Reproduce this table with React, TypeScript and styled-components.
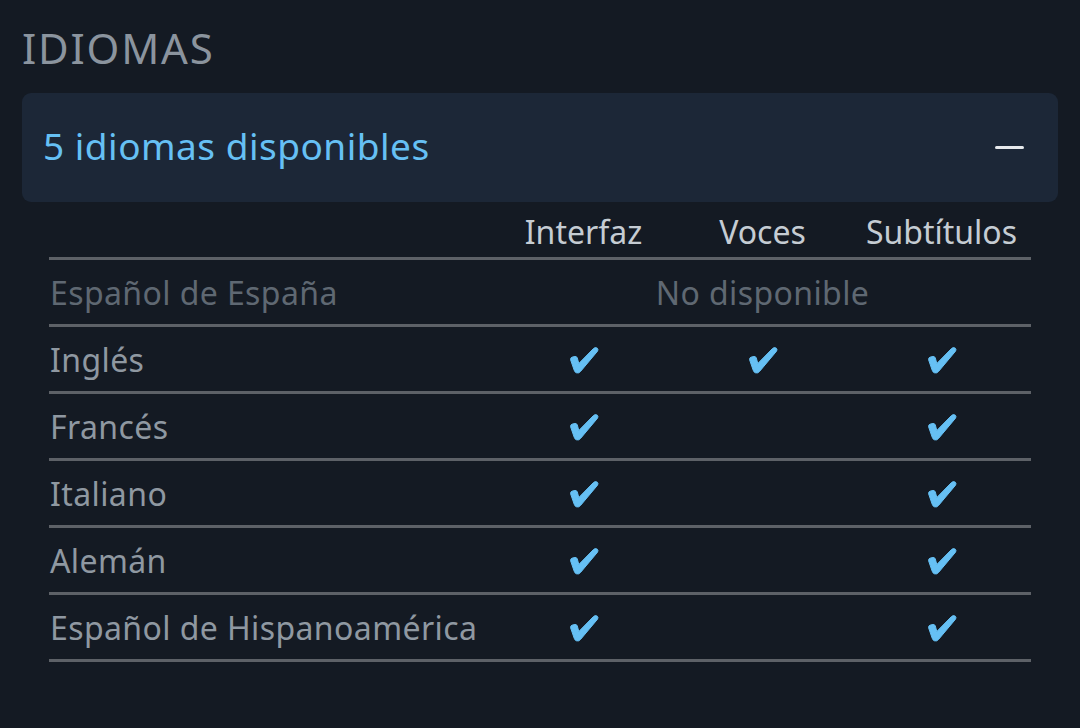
import React from "react";
import styled, { createGlobalStyle } from "styled-components";

const Global = createGlobalStyle`
  html, body { margin: 0; padding: 0; background: #141a23; }
  body { font-family: "Noto Sans", "Open Sans", sans-serif; }
`;

const Page = styled.div`
  width: 1080px;
  height: 728px;
  box-sizing: border-box;
  padding: 21px 22px 0 22px;
  background: #141a23;
`;

const Title = styled.h2`
  margin: 0 0 18px 0;
  font-size: 42px;
  font-weight: 400;
  line-height: 54px;
  color: #8b949e;
  letter-spacing: 1.8px;
`;

const Card = styled.div`
  height: 109px;
  background: #1c2737;
  border-radius: 9px;
  display: flex;
  align-items: center;
  justify-content: space-between;
  padding: 0 34px 0 21px;
`;

const CardLabel = styled.span`
  font-size: 37px;
  letter-spacing: 0.5px;
  color: #66c0f4;
  margin-top: -4px;
`;

const Minus = styled.span`
  display: block;
  width: 29px;
  height: 3px;
  border-radius: 2px;
  background: #e6e9ec;
`;

const Table = styled.div`
  margin: 0 27px;
  display: grid;
  grid-template-columns: 445px repeat(3, 1fr);
`;

const HeadCell = styled.div`
  height: 58px;
  display: flex;
  align-items: flex-end;
  justify-content: center;
  padding-bottom: 4px;
  box-sizing: border-box;
  font-size: 32px;
  letter-spacing: 0px;
  color: #c5ccd3;
  border-bottom: 3px solid #5d6167;
`;

const Cell = styled.div<{ $span?: number; $muted?: boolean; $left?: boolean }>`
  grid-column: span ${(p) => p.$span ?? 1};
  height: 67px;
  box-sizing: border-box;
  border-bottom: 3px solid #5d6167;
  display: flex;
  align-items: center;
  justify-content: ${(p) => (p.$left ? "flex-start" : "center")};
  padding-left: ${(p) => (p.$left ? "1px" : "0")};
  font-size: 32px;
  letter-spacing: 0.4px;
  color: ${(p) => (p.$muted ? "#5f6872" : "#8f98a1")};
`;

const CheckIcon = styled.svg`
  display: block;
  width: 30px;
  height: 30px;
  margin-top: 2px;
`;

const Check = () => (
  <CheckIcon viewBox="0 0 30 30" aria-hidden="true">
    <path
      d="M1.5 14.5 Q1.5 12.5 3.5 12 L6 11.5 Q7.8 11.3 8.3 13 L9.8 18.5 L24.5 3.5 Q26.5 1.8 28.3 3.2 Q29.6 4.6 28.5 6.2 L11.5 26.5 Q9.6 28.6 7.4 27.8 Q5.8 27.2 5.2 25.2 Z"
      fill="#66c0f4"
      stroke="#66c0f4"
      strokeWidth={1}
      strokeLinejoin="round"
    />
  </CheckIcon>
);

const rows: { name: string; ui: boolean; voice: boolean; subs: boolean }[] = [
  { name: "Inglés", ui: true, voice: true, subs: true },
  { name: "Francés", ui: true, voice: false, subs: true },
  { name: "Italiano", ui: true, voice: false, subs: true },
  { name: "Alemán", ui: true, voice: false, subs: true },
  { name: "Español de Hispanoamérica", ui: true, voice: false, subs: true },
];

const Mark = ({ on }: { on: boolean }) => (on ? <Check /> : null);

export default function App() {
  return (
    <Page>
      <Global />
      <Title>IDIOMAS</Title>
      <Card>
        <CardLabel>5 idiomas disponibles</CardLabel>
        <Minus />
      </Card>
      <Table>
        <HeadCell />
        <HeadCell>Interfaz</HeadCell>
        <HeadCell>Voces</HeadCell>
        <HeadCell>Subtítulos</HeadCell>
        <Cell $left $muted>Español de España</Cell>
        <Cell $span={3} $muted>No disponible</Cell>
        {rows.map((r) => (
          <React.Fragment key={r.name}>
            <Cell $left>{r.name}</Cell>
            <Cell><Mark on={r.ui} /></Cell>
            <Cell><Mark on={r.voice} /></Cell>
            <Cell><Mark on={r.subs} /></Cell>
          </React.Fragment>
        ))}
      </Table>
    </Page>
  );
}
